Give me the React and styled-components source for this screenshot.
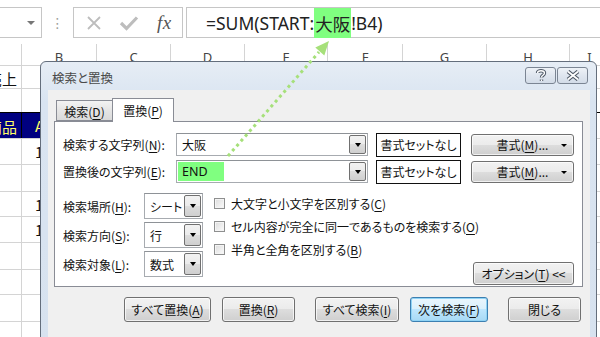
import React from 'react'
import styled, { createGlobalStyle } from 'styled-components'

const GlobalStyle = createGlobalStyle`
  html, body { margin: 0; padding: 0; background: #fff; }
  body { width: 600px; height: 337px; overflow: hidden; }
  #root { width: 600px; height: 337px; }
`

const jp = `"Noto Sans CJK JP", "Noto Sans", sans-serif`

const Page = styled.div`
  position: relative;
  width: 600px;
  height: 337px;
  overflow: hidden;
  background: #fff;
  font-family: ${jp};
`

/* ---------- formula bar ---------- */

const FormulaBar = styled.div`
  display: flex;
  align-items: stretch;
  height: 31px;
  padding-top: 7px;
  padding-bottom: 6px;
`

const NameBox = styled.div`
  width: 43px;
  margin-left: -1px;
  border: 1px solid #c6c6c6;
  box-sizing: border-box;
  display: flex;
  align-items: center;
  justify-content: flex-end;
  padding-right: 6px;
`

const SmallArrow = styled.span`
  width: 0;
  height: 0;
  border-left: 4px solid transparent;
  border-right: 4px solid transparent;
  border-top: 4px solid #777;
`

const Grip = styled.div`
  width: 31px;
  display: flex;
  align-items: center;
  justify-content: center;
  color: #a0a0a0;
  font-size: 14px;
  font-family: "DejaVu Sans", sans-serif;
`

const FxBox = styled.div`
  width: 110px;
  border: 1px solid #c6c6c6;
  box-sizing: border-box;
  display: flex;
  align-items: center;
  padding-left: 12px;
  gap: 17px;
`

const Fx = styled.span`
  font-family: "Liberation Serif", serif;
  font-style: italic;
  font-size: 19px;
  color: #555;
  margin-left: 1px;
  letter-spacing: 0.5px;
`

const FormulaInput = styled.div`
  flex: 1;
  margin-left: 3px;
  margin-right: -2px;
  border: 1px solid #c6c6c6;
  box-sizing: border-box;
  display: flex;
  align-items: center;
  padding-left: 19px;
  font-family: "Noto Sans", "Noto Sans CJK JP", sans-serif;
  font-size: 17.5px;
  color: #222;
  white-space: pre;
`

const Mark = styled.span`
  background: #80ff80;
  padding: 3px 1px 2px;
  font-family: ${jp};
`

/* ---------- sheet ---------- */

const cols = [22, 75, 74, 74, 83, 75, 84, 83, 40]
const letters = ['', 'B', 'C', 'D', 'E', 'F', 'G', 'H', 'I']

const Sheet = styled.div`
  display: flex;
  flex-direction: column;
`

const Row = styled.div`
  display: flex;
  height: ${p => p.$h}px;
  border-bottom: 1px solid ${p => (p.$dark ? '#000' : '#d4d4d4')};
  box-sizing: border-box;
`

const Cell = styled.div`
  flex: none;
  width: ${p => p.$w}px;
  box-sizing: border-box;
  border-right: 1px solid ${p => (p.$dark ? '#000' : '#d4d4d4')};
  background: ${p => (p.$dark ? '#000080' : 'transparent')};
  color: ${p => (p.$dark ? '#ffff66' : '#111')};
  font-size: 15px;
  display: flex;
  align-items: center;
  justify-content: ${p => (p.$right ? 'flex-end' : 'flex-start')};
  padding: ${p => (p.$right ? '2px 4px 0 0' : '0 0 0 13px')};
  overflow: hidden;
  white-space: nowrap;
`

const HeadCell = styled(Cell)`
  justify-content: center;
  padding: 4px 0 0;
  color: #444;
  font-family: "Noto Sans", sans-serif;
  font-size: 13px;
`

/* ---------- dialog ---------- */

const Dialog = styled.div`
  position: absolute;
  left: 40px;
  top: 61px;
  width: 557px;
  height: 292px;
  box-sizing: border-box;
  border: 1px solid #646e7c;
  border-radius: 6px 6px 0 0;
  background: linear-gradient(#e6edf5, #d9e4f1 40px, #d7e2ef);
  display: flex;
  flex-direction: column;
  font-size: 12px;
  font-feature-settings: "palt";
  color: #111;
`

const TitleBar = styled.div`
  height: 28px;
  flex: none;
  display: flex;
  align-items: center;
  padding: 0 8px 0 11px;
`

const Title = styled.div`
  flex: 1;
  color: #4a4a4a;
  font-size: 12.5px;
  padding-top: 2px;
`

const CapBtn = styled.div`
  width: 31px;
  height: 17px;
  box-sizing: border-box;
  margin-left: ${p => (p.$first ? 0 : 1)}px;
  border: 1px solid #7b8593;
  border-radius: 3px;
  background: linear-gradient(#eef2f7, #dfe6ef 50%, #d3dce8);
  display: flex;
  align-items: center;
  justify-content: center;
  margin-top: -2px;
`

const Client = styled.div`
  flex: 1;
  margin: 0 6px 0 7px;
  background: #f0f0f0;
  padding: 8px 7px 0 6px;
  display: flex;
  flex-direction: column;
`

const Tabs = styled.div`
  display: flex;
  align-items: flex-end;
  height: 23px;
  padding-left: 2px;
  position: relative;
  z-index: 1;
`

const Tab = styled.div`
  box-sizing: border-box;
  height: ${p => (p.$active ? 24 : 21)}px;
  width: ${p => (p.$active ? 62 : 57)}px;
  margin-bottom: ${p => (p.$active ? -1 : 0)}px;
  border: 1px solid #898c95;
  border-bottom: ${p => (p.$active ? 'none' : '1px solid #898c95')};
  margin-left: ${p => (p.$active ? -1 : 0)}px;
  background: ${p => (p.$active ? '#fff' : 'linear-gradient(#f3f3f3, #e5e5e5 50%, #dadada)')};
  display: flex;
  align-items: center;
  justify-content: center;
  padding-top: ${p => (p.$active ? 0 : 1)}px;
`

const Panel = styled.div`
  height: 166px;
  box-sizing: border-box;
  border: 1px solid #898c95;
  background: #fff;
  padding: 11px 0 0 8px;
  display: flex;
  flex-direction: column;
`

const FieldRow = styled.div`
  display: flex;
  align-items: center;
  height: 23px;
  margin-bottom: 4px;
`

const Label = styled.div`
  width: ${p => p.$w}px;
  flex: none;
  white-space: nowrap;
`

const Combo = styled.div`
  width: ${p => p.$w}px;
  height: ${p => p.$h || 23}px;
  flex: none;
  box-sizing: border-box;
  border: 1px solid #a7abb0;
  border-top-color: #8e9297;
  background: #fff;
  display: flex;
  align-items: stretch;
  padding: 1px;
`

const ComboText = styled.div`
  flex: 1;
  display: flex;
  align-items: center;
  padding-left: 4px;
  font-size: ${p => (p.$latin ? 12.5 : 12)}px;
  font-family: ${p => (p.$latin ? `"Noto Sans", sans-serif` : 'inherit')};
`

const Hilite = styled.span`
  background: #80ff80;
  height: 100%;
  display: flex;
  align-items: center;
  width: 42px;
  margin-left: -4px;
  padding-left: 4px;
`

const DropBtn = styled.div`
  width: 17px;
  flex: none;
  box-sizing: border-box;
  border: 1px solid #707070;
  border-radius: 2px;
  background: linear-gradient(#f2f2f2, #ebebeb 50%, #dddddd 50%, #cfcfcf);
  display: flex;
  align-items: center;
  justify-content: center;
  margin-left: auto;
`

const Tri = styled.span`
  width: 0;
  height: 0;
  border-left: 3.5px solid transparent;
  border-right: 3.5px solid transparent;
  border-top: 4px solid #000;
`

const NoFormat = styled.div`
  width: 85px;
  height: 24px;
  flex: none;
  box-sizing: border-box;
  margin-left: 8px;
  border: 1.5px solid #111;
  background: #fff;
  display: flex;
  align-items: center;
  justify-content: center;
`

const Button = styled.div`
  width: ${p => p.$w}px;
  height: ${p => p.$h || 23}px;
  flex: none;
  box-sizing: border-box;
  margin-left: ${p => p.$ml || 0}px;
  border: 1px solid ${p => (p.$default ? '#3c7fb1' : '#707070')};
  border-radius: 3px;
  background: ${p =>
    p.$default
      ? 'linear-gradient(#eaf6fd, #d9f0fc 50%, #bee6fd 50%, #a7d9f5)'
      : 'linear-gradient(#f2f2f2, #ebebeb 50%, #dddddd 50%, #cfcfcf)'};
  box-shadow: inset 0 0 0 1px ${p => (p.$default ? '#8fd3f5' : 'rgba(255,255,255,0.7)')};
  display: flex;
  align-items: center;
  justify-content: center;
  position: relative;
  white-space: nowrap;
`

const BtnTri = styled(Tri)`
  position: absolute;
  right: 6px;
  top: 9px;
  border-left-width: 3px;
  border-right-width: 3px;
  border-top-width: 3px;
`

const Options = styled.div`
  display: flex;
  margin-top: 6px;
`

const SelectCol = styled.div`
  display: flex;
  flex-direction: column;
  gap: 3px;
`

const SelectRow = styled.div`
  display: flex;
  align-items: center;
`

const CheckCol = styled.div`
  margin-left: 11px;
  padding-top: 4px;
  display: flex;
  flex-direction: column;
  gap: 10px;
  flex: 1;
`

const CheckRow = styled.div`
  display: flex;
  align-items: center;
  height: 13px;
  white-space: nowrap;
`

const Box = styled.span`
  width: 11px;
  height: 11px;
  box-sizing: border-box;
  border: 1px solid #8e8f8f;
  background: linear-gradient(135deg, #dcdcdc, #fbfbfb);
  box-shadow: inset 0 0 0 1px #f4f4f4;
  margin-right: 6px;
  flex: none;
`

const OptionBtnRow = styled.div`
  display: flex;
  justify-content: flex-end;
  padding-right: 8px;
  margin-top: -4px;
`

const BottomRow = styled.div`
  display: flex;
  margin-top: 10px;
  padding-left: 70px;
`

const Arrow = styled.svg`
  position: absolute;
  left: 0;
  top: 0;
  pointer-events: none;
`

const U = styled.u`
  text-underline-offset: 2px;
`

function Drop() {
  return (
    <DropBtn>
      <Tri />
    </DropBtn>
  )
}

const rowHeights = [23, 24, 26, 26, 27, 25, 26, 27, 25, 27, 26]

export default function App() {
  return (
    <Page>
      <GlobalStyle />
      <FormulaBar>
        <NameBox>
          <SmallArrow />
        </NameBox>
        <Grip>⋮</Grip>
        <FxBox>
          <svg width="16" height="16" viewBox="0 0 16 16">
            <path d="M2 2 L14 14 M14 2 L2 14" stroke="#bdbdbd" strokeWidth="1.8" fill="none" />
          </svg>
          <svg width="20" height="16" viewBox="0 0 20 16">
            <path d="M2 8 L7.5 13.5 L18 2.5" stroke="#bdbdbd" strokeWidth="3.2" fill="none" />
          </svg>
          <Fx>fx</Fx>
        </FxBox>
        <FormulaInput>
          =SUM(START:<Mark>大阪</Mark>!B4)
        </FormulaInput>
      </FormulaBar>

      <Sheet>
        <Row $h={22}>
          {cols.map((w, i) => (
            <HeadCell key={i} $w={w}>
              {letters[i]}
            </HeadCell>
          ))}
        </Row>
        {rowHeights.map((h, r) => (
          <Row key={r} $h={h} $dark={r === 1}>
            {cols.map((w, i) => {
              const dark = r === 2 && i < 2
              let text = ''
              if (r === 0 && i === 0) text = '売上'
              if (r === 2 && i === 0) text = '商品'
              if (r === 2 && i === 1) text = 'A店'
              if ((r === 3 || r === 5 || r === 6) && i === 1) text = '1'
              return (
                <Cell key={i} $w={w} $dark={dark} $right={i === 0}>
                  {text}
                </Cell>
              )
            })}
          </Row>
        ))}
      </Sheet>

      <Dialog>
        <TitleBar>
          <Title>検索と置換</Title>
          <CapBtn $first>
            <svg width="12" height="13" viewBox="0 0 12 13">
              <path
                d="M2.5 4 C2.5 1 9.5 1 9.5 4 C9.5 6.5 6.5 6 6.5 8.5 M6.5 10.5 L6.5 12"
                stroke="#4e5866"
                strokeWidth="3.4"
                fill="none"
              />
              <path
                d="M2.5 4 C2.5 1 9.5 1 9.5 4 C9.5 6.5 6.5 6 6.5 8.5 M6.5 10.5 L6.5 12"
                stroke="#fff"
                strokeWidth="1.4"
                fill="none"
              />
            </svg>
          </CapBtn>
          <CapBtn>
            <svg width="16" height="11" viewBox="0 0 16 11">
              <path d="M3 1.5 L13 9.5 M13 1.5 L3 9.5" stroke="#4e5866" strokeWidth="4" fill="none" />
              <path d="M3 1.5 L13 9.5 M13 1.5 L3 9.5" stroke="#fff" strokeWidth="1.8" fill="none" />
            </svg>
          </CapBtn>
        </TitleBar>
        <Client>
          <Tabs>
            <Tab>
              検索(<U>D</U>)
            </Tab>
            <Tab $active>
              置換(<U>P</U>)
            </Tab>
          </Tabs>
          <Panel>
            <FieldRow>
              <Label $w={113}>
                検索する文字列(<U>N</U>):
              </Label>
              <Combo $w={192}>
                <ComboText>大阪</ComboText>
                <Drop />
              </Combo>
              <NoFormat>書式セットなし</NoFormat>
              <Button $w={103} $h={22} $ml={10}>
                書式(<U>M</U>)...
                <BtnTri />
              </Button>
            </FieldRow>
            <FieldRow>
              <Label $w={113}>
                置換後の文字列(<U>E</U>):
              </Label>
              <Combo $w={192}>
                <ComboText $latin>
                  <Hilite>END</Hilite>
                </ComboText>
                <Drop />
              </Combo>
              <NoFormat>書式セットなし</NoFormat>
              <Button $w={103} $h={22} $ml={10}>
                書式(<U>M</U>)...
                <BtnTri />
              </Button>
            </FieldRow>
            <Options>
              <SelectCol>
                <SelectRow>
                  <Label $w={81}>
                    検索場所(<U>H</U>):
                  </Label>
                  <Combo $w={59} $h={26}>
                    <ComboText>シート</ComboText>
                    <Drop />
                  </Combo>
                </SelectRow>
                <SelectRow>
                  <Label $w={81}>
                    検索方向(<U>S</U>):
                  </Label>
                  <Combo $w={59} $h={26}>
                    <ComboText>行</ComboText>
                    <Drop />
                  </Combo>
                </SelectRow>
                <SelectRow>
                  <Label $w={81}>
                    検索対象(<U>L</U>):
                  </Label>
                  <Combo $w={59} $h={26}>
                    <ComboText>数式</ComboText>
                    <Drop />
                  </Combo>
                </SelectRow>
              </SelectCol>
              <CheckCol>
                <CheckRow>
                  <Box />
                  大文字と小文字を区別する(<U>C</U>)
                </CheckRow>
                <CheckRow>
                  <Box />
                  セル内容が完全に同一であるものを検索する(<U>O</U>)
                </CheckRow>
                <CheckRow>
                  <Box />
                  半角と全角を区別する(<U>B</U>)
                </CheckRow>
                <OptionBtnRow>
                  <Button $w={101}>
                    オプション(<U>T</U>) &lt;&lt;
                  </Button>
                </OptionBtnRow>
              </CheckCol>
            </Options>
          </Panel>
          <BottomRow>
            <Button $w={87} $h={25}>
              すべて置換(<U>A</U>)
            </Button>
            <Button $w={73} $h={25} $ml={11}>
              置換(<U>R</U>)
            </Button>
            <Button $w={84} $h={25} $ml={20}>
              すべて検索(<U>I</U>)
            </Button>
            <Button $w={78} $h={25} $ml={11} $default>
              次を検索(<U>F</U>)
            </Button>
            <Button $w={73} $h={25} $ml={20}>
              閉じる
            </Button>
          </BottomRow>
        </Client>
      </Dialog>

      <Arrow width="600" height="337">
        <line
          x1="228"
          y1="156"
          x2="319"
          y2="52"
          stroke="#a6e07a"
          strokeWidth="3"
          strokeDasharray="3 3.5"
        />
        <polygon points="329,41 324.3,55.5 315.3,47.5" fill="#a6e07a" />
      </Arrow>
    </Page>
  )
}
